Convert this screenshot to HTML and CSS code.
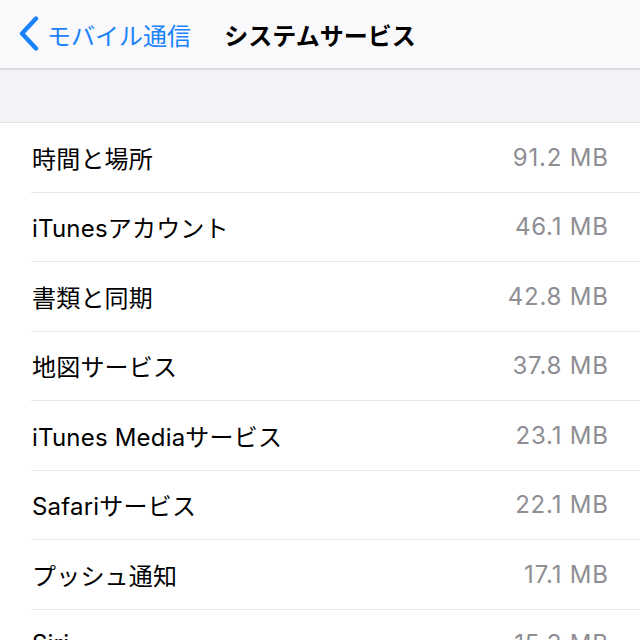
FILE: index.html
```html
<!DOCTYPE html>
<html lang="ja">
<head>
<meta charset="utf-8">
<link rel="stylesheet" href="styles.css">
</head>
<body>
<header class="nav">
  <div class="back">
    <svg class="chev" width="22" height="36" viewBox="0 0 22 36"><path d="M18 2.5 L4 17.5 L18 32.5" fill="none" stroke="#1a82fb" stroke-width="4.4" stroke-linecap="round" stroke-linejoin="round"/></svg>
    <span class="back-label">モバイル通信</span>
  </div>
  <h1 class="title">システムサービス</h1>
</header>
<div class="gap"></div>
<ul class="list">
  <li class="row"><span class="name">時間と場所</span><span class="val">91.2 MB</span></li>
  <li class="row"><span class="name">iTunesアカウント</span><span class="val">46.1 MB</span></li>
  <li class="row"><span class="name">書類と同期</span><span class="val">42.8 MB</span></li>
  <li class="row"><span class="name">地図サービス</span><span class="val">37.8 MB</span></li>
  <li class="row"><span class="name">iTunes Mediaサービス</span><span class="val">23.1 MB</span></li>
  <li class="row"><span class="name">Safariサービス</span><span class="val">22.1 MB</span></li>
  <li class="row"><span class="name">プッシュ通知</span><span class="val">17.1 MB</span></li>
  <li class="row"><span class="name">Siri</span><span class="val">15.3 MB</span></li>
</ul>
</body>
</html>
```
FILE: styles.css
```css
* { box-sizing: border-box; }
html, body { margin: 0; padding: 0; }
body {
  width: 640px;
  height: 640px;
  overflow: hidden;
  background: #ffffff;
  font-family: "Inter", "Noto Sans CJK JP", sans-serif;
  color: #000;
}
.nav {
  height: 70px;
  background: #f9f9fb;
  border-bottom: 2px solid #dcdcde;
  display: flex;
  align-items: center;
  justify-content: center;
  position: relative;
}
.back {
  position: absolute;
  left: 18px;
  top: 0;
  height: 68px;
  display: flex;
  align-items: center;
  gap: 7px;
  color: #1a82fb;
  font-size: 24px;
}
.chev { display: block; }
.title {
  margin: 0;
  font-size: 24px;
  font-weight: bold;
}
.gap {
  height: 53px;
  background: #f2f2f7;
  border-bottom: 1px solid #e3e3e6;
}
.list {
  list-style: none;
  margin: 0;
  padding: 0 0 0 31px;
}
.row {
  height: 69.5px;
  display: flex;
  align-items: center;
  justify-content: space-between;
  padding: 0 32px 0 1px;
  border-bottom: 1px solid #e6e6e8;
  font-size: 24px;
}
.name { letter-spacing: 0.2px; }
.val { color: #8e8e93; letter-spacing: 0.8px; margin-right: -0.8px; }
```
